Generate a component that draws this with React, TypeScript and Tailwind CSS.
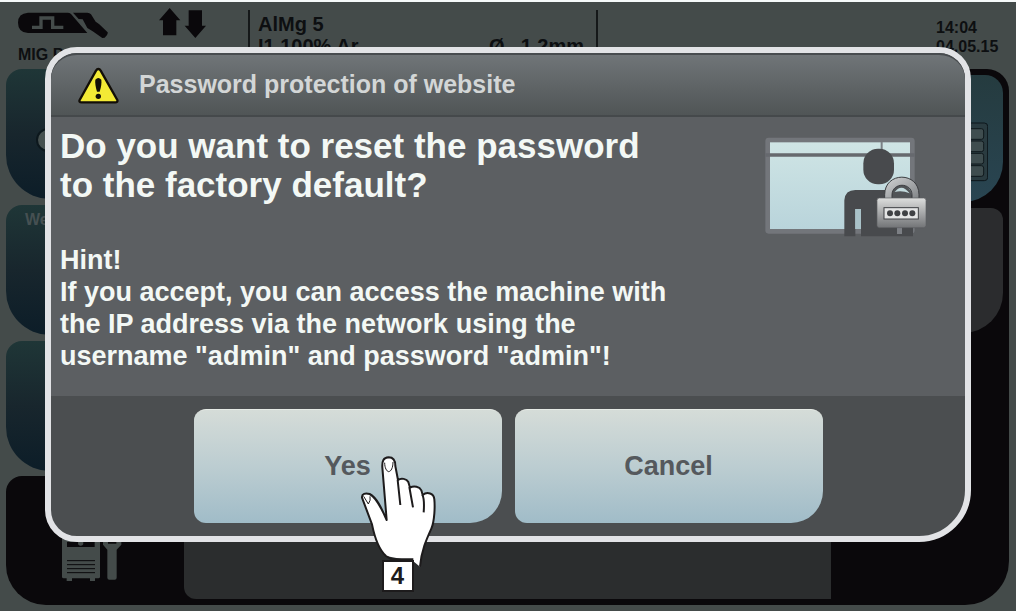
import { useState } from "react";

function TorchIcon() {
  return (
    <svg width="90" height="27" viewBox="54 36 270 81" aria-hidden="true">
      <path
        d="M84 38H203Q209 38 213 42L262 99H84Q54 97 54 68Q54 40 84 38Z"
        fill="#0a080b"
      />
      <path
        d="M96 82H123V54H158V82H190"
        fill="none"
        stroke="#444b4a"
        strokeWidth="10"
      />
      <path
        d="M219 38H262Q269 38 273 43L287 65L297 72L323 97Q325 104 314 113L307 114L278 94L262 84L248 58L236 57Z"
        fill="#0a080b"
      />
    </svg>
  );
}

function ArrowsIcon() {
  return (
    <svg width="47" height="30" viewBox="478 23 141 90" aria-hidden="true">
      <path d="M510 23L542 60H530V105H490V60H478Z" fill="#0a080b" />
      <path d="M587 113L619 76H607V30H567V76H555Z" fill="#0a080b" />
    </svg>
  );
}

function WarningIcon() {
  return (
    <svg width="41" height="37" viewBox="232 199 123 111" aria-hidden="true">
      <path
        d="M293 205Q297 205 300 210L350 298Q352 305 344 305H243Q234 305 237 298L286 210Q289 205 293 205Z"
        fill="#f3ea35"
        stroke="#120e08"
        strokeWidth="7"
        strokeLinejoin="round"
      />
      <path d="M284 237Q293 227 302 237Q304 250 297 273H289Q282 250 284 237Z" fill="#120e08" />
      <circle cx="293" cy="287" r="8" fill="#120e08" />
    </svg>
  );
}

function WebsiteLockIcon() {
  return (
    <svg
      width="162"
      height="101"
      viewBox="45 35 486 303"
      className="shrink-0"
      aria-hidden="true"
    >
      <defs>
        <linearGradient id="glass" x1="0" y1="0" x2="0" y2="1">
          <stop offset="0" stopColor="#cfe5e5" />
          <stop offset="1" stopColor="#b9d4db" />
        </linearGradient>
        <linearGradient id="metal" x1="0" y1="0" x2="0" y2="1">
          <stop offset="0" stopColor="#dddedd" />
          <stop offset="1" stopColor="#727477" />
        </linearGradient>
        <linearGradient id="shackle" x1="0" y1="0" x2="1" y2="1">
          <stop offset="0" stopColor="#d2d4d5" />
          <stop offset="1" stopColor="#7f8285" />
        </linearGradient>
      </defs>
      <rect x="46" y="37" width="448" height="288" rx="10" fill="#73767b" />
      <rect x="60" y="51" width="420" height="260" fill="url(#glass)" />
      <path d="M46 89H494" stroke="#66696e" strokeWidth="11" />
      <path d="M395 50V90" stroke="#7b8186" strokeWidth="6" />
      <path
        d="M283 333V225Q285 194 316 194H458Q489 196 489 225V333H333V251H316V333Z"
        fill="#484a4d"
      />
      <path d="M316 251H333V311H316Z" fill="#a9c2c8" />
      <rect x="441" y="304" width="15" height="22" fill="#7c7f84" />
      <rect x="340" y="70" width="92" height="107" rx="44" fill="#484a4d" />
      <path d="M427 222Q424 180 455 178Q486 180 484 222Z" fill="#515457" />
      <path d="M434 200Q455 172 479 204Q456 194 434 200Z" fill="#c3dadd" />
      <path
        d="M404 222V208C404 138 507 138 507 208V222H486V209C486 170 426 170 426 209V222Z"
        fill="url(#shackle)"
        stroke="#3b3d40"
        strokeWidth="3"
      />
      <rect
        x="381"
        y="218"
        width="147"
        height="89"
        rx="7"
        fill="url(#metal)"
        stroke="#5c5e61"
        strokeWidth="2"
      />
      <rect
        x="402"
        y="247"
        width="103"
        height="34"
        fill="#e4e5e5"
        stroke="#3f4144"
        strokeWidth="3"
      />
      <circle cx="420" cy="264" r="9" fill="#3f4144" />
      <circle cx="442" cy="264" r="9" fill="#3f4144" />
      <circle cx="465" cy="264" r="9" fill="#3f4144" />
      <circle cx="487" cy="264" r="9" fill="#3f4144" />
    </svg>
  );
}

function KeypadIcon() {
  return (
    <svg width="60" height="60" viewBox="742 367 180 180" aria-hidden="true">
      <rect
        x="744"
        y="370"
        width="177"
        height="173"
        rx="10"
        fill="#2a3b40"
        stroke="#0c161b"
        strokeWidth="3"
      />
      {[387, 424, 461, 498].map((y) => (
        <rect
          key={y}
          x="780"
          y={y}
          width="129"
          height="32"
          rx="7"
          fill="#3f4d4f"
          stroke="#10191d"
          strokeWidth="3"
        />
      ))}
    </svg>
  );
}

function ServiceIcon() {
  return (
    <svg width="62" height="50" viewBox="184 398 186 150" aria-hidden="true">
      <path d="M187 398H301V532Q301 537 296 537H286V545H271V537H217V545H201V537H192Q187 537 187 532Z" fill="#444b4a" />
      <path d="M202 428H285V443H202Z" fill="#0a080b" />
      <circle cx="243" cy="431" r="8" fill="#444b4a" />
      <path
        d="M202 484H286M202 496H286M202 508H286M202 520H286"
        stroke="#0a080b"
        strokeWidth="3"
      />
      <path
        d="M310 400V436L323 451V535Q323 541 329 541H345Q351 541 351 535V451L365 436V400H350V433H325V400Z"
        fill="#444b4a"
      />
    </svg>
  );
}

function HandIcon() {
  return (
    <svg width="77" height="114" viewBox="30 50 231 342" aria-hidden="true">
      <path
        d="M108 242L97 84C94 64 100 55 116 54C130 54 136 64 136 80L144 122C153 115 170 118 175 128L180 145C192 138 209 142 214 153L218 167C232 155 252 163 253 180C255 200 254 245 244 268C229 301 214 335 210 382L190 366L108 350C86 330 72 285 66 255L36 175C35 163 46 160 59 164C79 174 94 205 108 242Z"
        fill="#fff"
      />
      <path
        d="M210 382C214 335 229 301 244 268C254 245 255 200 253 180C252 163 232 155 218 167L214 153C209 142 192 138 180 145L175 128C170 118 153 115 144 122L136 80C136 64 130 54 116 54C100 55 96 64 97 84L110 242C94 205 79 174 59 164C46 160 35 163 36 175L66 255C72 285 86 330 108 350L125 360H190"
        fill="none"
        stroke="#1d1b1c"
        strokeWidth="6"
        strokeLinejoin="round"
      />
      <path
        d="M143 122L151 197M178 143L189 204M217 166Q224 180 221 219"
        fill="none"
        stroke="#1d1b1c"
        strokeWidth="6"
      />
      <path
        d="M104 70C104 86 110 96 116 97C123 96 129 86 129 68M41 171L55 194Q63 183 60 171"
        fill="none"
        stroke="#1d1b1c"
        strokeWidth="3"
      />
    </svg>
  );
}

const sideButton =
  "h-[130px] w-full rounded-tl-2xl rounded-bl-[44px] bg-linear-to-b from-[#1f3637] via-[#18262d] to-[#0c1d28] text-left";

const dialogButton =
  "h-[114px] w-[308px] rounded-xl rounded-br-[32px] border-t border-[#e6ebe6] bg-linear-to-b from-[#d5dcd8] via-[#bccdd1] to-[#a0bcc8] text-[27px] font-bold text-[#55595d]";

function Machine() {
  return (
    <div className="px-[6px] pb-[6px]">
      <header className="flex h-[67px] text-base leading-[19px] font-bold text-[#0d0f11]">
        <div className="w-[242px] shrink-0 pt-[6px] pl-3">
          <div className="flex h-[37px] justify-between pr-[42px]">
            <span className="pt-1">
              <TorchIcon />
            </span>
            <ArrowsIcon />
          </div>
          <p>MIG Pulse</p>
        </div>
        <div className="mt-2 w-[350px] shrink-0 border-x-2 border-[#151819] px-2 pt-[3px] text-xl leading-[22px]">
          <p>AlMg 5</p>
          <div className="flex justify-between pr-1">
            <span>I1 100% Ar</span>
            <span className="flex gap-4">
              <span>Ø</span>
              <span>1.2mm</span>
            </span>
          </div>
        </div>
        <div className="ml-auto w-[74px] pt-4">
          <p>14:04</p>
          <p>04.05.15</p>
        </div>
      </header>

      <div className="flex">
        <nav className="flex w-[178px] flex-col gap-[6px] pb-[5px]">
          <button aria-label="Process" className={`${sideButton} pt-3`}>
            <span className="ml-[30px] block size-6 rounded-full border-2 border-[#0d181d] bg-[#46504f]" />
          </button>
          <button
            className={`${sideButton} flex items-start pt-[5px] pl-[19px] text-base leading-[19px] font-bold text-[#465052]`}
          >
            Welding
          </button>
          <button aria-label="Jobs" className={sideButton} />
        </nav>
        <div className="mr-px flex-1 rounded-tr-[22px] bg-[#0a080b] pt-[6px] pr-[6px]">
          <div className="ml-auto flex w-[178px] flex-col gap-[6px]">
            <button
              aria-label="Keypad"
              className="flex h-[127px] items-center justify-end rounded-tr-[18px] rounded-br-[40px] bg-linear-to-b from-[#253b3f] to-[#294552] pt-[27px] pr-[15px]"
            >
              <KeypadIcon />
            </button>
            <div className="h-[125px] rounded-tr-xl rounded-br-[40px] bg-[#2b2c2e]" />
          </div>
        </div>
      </div>

      <footer className="mr-px flex h-[129px] rounded-tl-2xl rounded-br-[44px] rounded-bl-[40px] bg-[#0a080b]">
        <div className="flex w-[178px] items-end pb-[23px] pl-[55px]">
          <ServiceIcon />
        </div>
        <div className="mr-[178px] mb-[6px] flex-1 rounded-bl-xl bg-[#2b2d2e]" />
      </footer>
    </div>
  );
}

function App() {
  const [open, setOpen] = useState<boolean>(true);

  return (
    <div className="relative min-h-screen border-t-2 border-[#f6fafa] bg-[#444b4a] font-['Liberation_Sans',Arial,sans-serif]">
      <Machine />

      {open && (
        <section
          role="dialog"
          aria-labelledby="dialog-title"
          className="absolute inset-x-[45px] top-[45px] rounded-[32px] rounded-br-[52px] border-6 border-[#e2e3e6] bg-[#4b4e50]"
        >
          <div className="flex h-16 items-center gap-5 rounded-t-[26px] border-t-2 border-b-2 border-t-[#484c4f] border-b-[#45494b] bg-linear-to-b from-[#707578] to-[#505556] px-[27px]">
            <WarningIcon />
            <h1
              id="dialog-title"
              className="text-[25px] font-bold text-[#d3d6d6]"
            >
              Password protection of website
            </h1>
          </div>

          <div className="flex justify-between bg-[#5c5f62] pt-[9px] pr-[38px] pb-6 pl-[9px] font-bold text-[#f3f8f5]">
            <div>
              <h2 className="text-[35px] leading-[39px]">
                Do you want to reset the password
                <br />
                to the factory default?
              </h2>
              <p className="mt-10 text-[27px] leading-8">
                Hint!
                <br />
                If you accept, you can access the machine with
                <br />
                the IP address via the network using the
                <br />
                username "admin" and password "admin"!
              </p>
            </div>
            <div className="pt-[11px]">
              <WebsiteLockIcon />
            </div>
          </div>

          <div className="flex justify-center gap-[13px] py-[13px]">
            <div className="relative">
              <button className={dialogButton} onClick={() => setOpen(false)}>
                Yes
              </button>
              {/* pointer with the step number */}
              <div className="pointer-events-none absolute top-[47px] left-[166px]">
                <HandIcon />
                <span className="absolute top-[104px] left-[22px] flex size-8 items-center justify-center border-2 border-[#1d1b1c] bg-white text-2xl font-bold text-[#1d1b1c]">
                  4
                </span>
              </div>
            </div>
            <button className={dialogButton} onClick={() => setOpen(false)}>
              Cancel
            </button>
          </div>
        </section>
      )}
    </div>
  );
}

export default App;
